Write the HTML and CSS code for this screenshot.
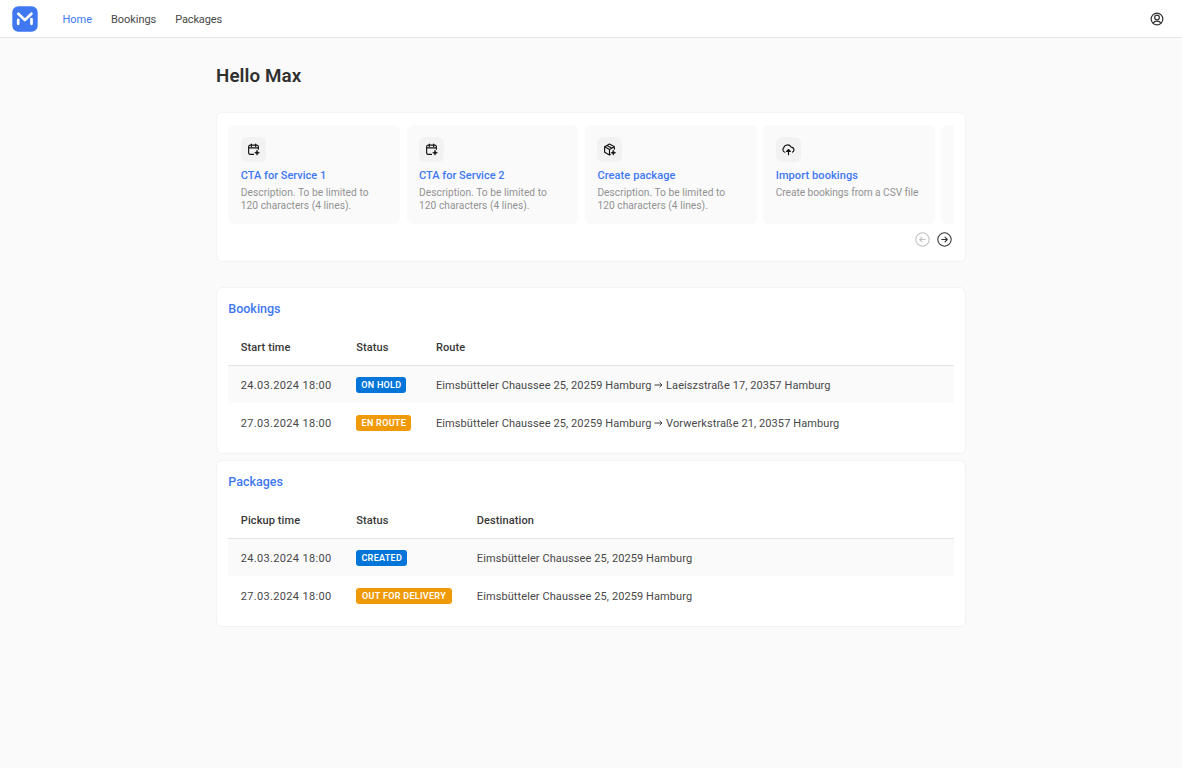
FILE: index.html
```html
<!DOCTYPE html>
<html lang="en">
<head>
<meta charset="utf-8">
<title>Home</title>
<link rel="stylesheet" href="styles.css">
</head>
<body>
<svg width="0" height="0" class="defs" aria-hidden="true">
  <symbol id="calendar" viewBox="0 0 24 24"><path d="M21 11.500V7a3 3 0 0 0-3-3H6a3 3 0 0 0-3 3v11a3 3 0 0 0 3 3h6M8 2v4.500M16 2v4.500M3 9h18"/><path fill="#111" stroke-width="1" d="M18.500 13.500l1.300 3.200 3.200 1.300-3.200 1.300-1.300 3.200-1.300-3.200L14 18l3.200-1.300z"/></symbol>
  <symbol id="package" viewBox="0 0 24 24"><path d="M21 11.500V7L12 2 3 7v10l9 5 1.500-.8M3 7l9 5 9-5M12 12v10M7.500 4.500l9 5"/><path fill="#111" stroke-width="1" d="M19 13.500l1.300 3.200 3.200 1.300-3.200 1.300-1.300 3.200-1.300-3.200-3.200-1.300 3.200-1.300z"/></symbol>
  <symbol id="cloud" viewBox="0 0 24 24"><path d="M5.500 17A4.800 4.800 0 0 1 3 9 7.500 7.500 0 0 1 16.800 7.500 5 5 0 0 1 19.500 16.800M12 21.500v-7"/><path fill="#111" d="M8.500 15.500 12 12l3.500 3.500z"/></symbol>
  <symbol id="arrow" viewBox="0 0 24 24"><circle cx="12" cy="12" r="10.700"/><path d="M7.500 12h9M12.800 8.300l3.700 3.700-3.700 3.700"/></symbol>
</svg>
<header class="topbar">
  <svg class="logo" viewBox="0 0 26 26"><rect x=".3" y=".3" width="25.400" height="25.400" rx="6" fill="#4078f2"/><path d="M6.200 13.800v4M19.500 13v4.800M6.300 7.800l6.600 6.200 6.500-6.200" fill="none" stroke="#fff" stroke-width="2.700" stroke-linecap="round" stroke-linejoin="round"/></svg>
  <nav class="nav"><a class="nav-home">Home</a><a class="nav-bookings">Bookings</a><a class="nav-packages">Packages</a></nav>
  <svg class="icon user" viewBox="0 0 24 24"><circle cx="12" cy="12" r="10"/><circle cx="12" cy="9.500" r="4"/><path d="M5.500 19c1.500-3 3.500-3.500 6.500-3.500s5 .5 6.500 3.500"/></svg>
</header>
<main class="page">
  <h1 class="greeting"><span>Hello Max</span></h1>
  <section class="card actions">
    <div class="track">
      <article class="tile"><div class="tile-icon"><svg class="icon"><use href="#calendar"/></svg></div><h3 class="cta">CTA for Service 1</h3><p>Description. To be limited to<br>120 characters (4 lines).</p></article>
      <article class="tile"><div class="tile-icon"><svg class="icon"><use href="#calendar"/></svg></div><h3 class="cta">CTA for Service 2</h3><p>Description. To be limited to<br>120 characters (4 lines).</p></article>
      <article class="tile"><div class="tile-icon"><svg class="icon"><use href="#package"/></svg></div><h3>Create package</h3><p>Description. To be limited to<br>120 characters (4 lines).</p></article>
      <article class="tile"><div class="tile-icon"><svg class="icon"><use href="#cloud"/></svg></div><h3>Import bookings</h3><p class="csv">Create bookings from a CSV file</p></article>
      <article class="tile"></article>
    </div>
    <div class="pager"><svg class="icon prev"><use href="#arrow"/></svg><svg class="icon next"><use href="#arrow"/></svg></div>
  </section>
  <section class="card listing bookings">
    <h2>Bookings</h2>
    <div class="row head"><span>Start time</span><span>Status</span><span>Route</span></div>
    <div class="row striped"><span class="date">24.03.2024 18:00</span><span class="badge blue hold">ON HOLD</span><span class="place">Eimsbütteler Chaussee 25, 20259 Hamburg <svg class="to" viewBox="0 0 9 8"><path d="M.5 4h7.500M5.700 1.800 8 4 5.700 6.200"/></svg> Laeiszstraße 17, 20357 Hamburg</span></div>
    <div class="row"><span class="date">27.03.2024 18:00</span><span class="badge orange route">EN ROUTE</span><span class="place">Eimsbütteler Chaussee 25, 20259 Hamburg <svg class="to" viewBox="0 0 9 8"><path d="M.5 4h7.500M5.700 1.800 8 4 5.700 6.200"/></svg> Vorwerkstraße 21, 20357 Hamburg</span></div>
  </section>
  <section class="card listing packages">
    <h2>Packages</h2>
    <div class="row head"><span>Pickup time</span><span>Status</span><span>Destination</span></div>
    <div class="row striped"><span class="date">24.03.2024 18:00</span><span class="badge blue created">CREATED</span><span class="place">Eimsbütteler Chaussee 25, 20259 Hamburg</span></div>
    <div class="row"><span class="date">27.03.2024 18:00</span><span class="badge orange delivery">OUT FOR DELIVERY</span><span class="place">Eimsbütteler Chaussee 25, 20259 Hamburg</span></div>
  </section>
</main>
</body>
</html>
```
FILE: styles.css
```css
* { box-sizing: border-box; }
body { margin: 0; height: 768px; overflow: hidden; background: #fafafa; color: #484848; font-family: Roboto, "Noto Sans", sans-serif; font-size: 11px; }
h1, h2, h3, p { margin: 0; }
.defs { display: block; }
.icon { display: block; width: 13px; height: 13px; fill: none; stroke: #111; stroke-width: 2.1; stroke-linecap: round; stroke-linejoin: round; }
.topbar { display: flex; align-items: center; height: 38px; padding: 0 18.500px 0 12px; background: #fff; border-bottom: 1px solid #e7e7e7; }
.logo { width: 26px; height: 26px; }
.nav { display: flex; flex: 1; gap: 19px; margin-left: 24.500px; padding-top: 1px; letter-spacing: -.02px; }
.nav-home { color: #4078f2; }
.nav-bookings { letter-spacing: -.05px; }
.nav-packages { letter-spacing: -.14px; }
.user { width: 14px; height: 14px; stroke: #333; }
.page { width: 749.500px; margin-left: 216px; padding-top: 27px; }
.greeting { height: 23px; margin-bottom: 24px; font-size: 18.800px; font-weight: 600; line-height: 23px; color: #303030; letter-spacing: .1px; }
.card { background: #fff; border: 1px solid #f3f3f3; border-radius: 6px; }
.actions { height: 150px; margin-bottom: 25px; padding: 11.500px 11px 0 11.300px; }
.track { display: flex; gap: 6.500px; overflow: hidden; }
.tile { flex: 0 0 171.800px; min-width: 0; height: 99.500px; padding: 12.500px 0 12.500px 12.500px; background: #fafafa; border-radius: 6px; }
.tile-icon { display: grid; place-items: center; width: 25px; height: 25px; margin-bottom: 5.500px; background: #f2f2f2; border-radius: 6px; }
.tile h3 { font-size: 11px; font-weight: 500; line-height: 16px; color: #4078f2; letter-spacing: .1px; }
.tile .cta { letter-spacing: 0; }
.tile p { margin-top: 2px; font-size: 10.200px; line-height: 13.400px; color: #929292; letter-spacing: .04px; white-space: nowrap; }
.tile .csv { letter-spacing: -.05px; }
.pager { display: flex; justify-content: flex-end; gap: 7px; margin-top: 8px; padding-right: 1.500px; }
.pager .icon { width: 15px; height: 15px; stroke: #333; stroke-width: 1.700; }
.pager .prev { transform: scaleX(-1); stroke: #c0c0c0; }
.listing { height: 166px; margin-bottom: 7px; padding: 10.500px 11px 0 11.300px; }
.bookings { height: 166.500px; margin-bottom: 6.500px; }
.packages { height: 166.500px; }
.listing h2 { height: 20px; margin-bottom: 9.500px; font-size: 12.500px; font-weight: 500; line-height: 20px; color: #4078f2; letter-spacing: 0; }
.row { display: grid; align-items: center; height: 37.500px; padding: 0 12.500px; white-space: nowrap; }
.row > span:not(.badge) { padding-top: 1.500px; }
.row:last-child > span:not(.badge) { padding-top: 2.500px; }
.bookings .row { grid-template-columns: 115.500px 79.700px 1fr; }
.packages .row { grid-template-columns: 115.500px 120.500px 1fr; }
.head { border-bottom: 1px solid #e4e4e4; color: #383838; font-weight: 500; letter-spacing: .1px; }
.striped { background: #fafafa; }
.date { letter-spacing: .33px; }
.place { letter-spacing: .09px; }
.to { width: 9px; height: 8px; fill: none; stroke: #404040; stroke-width: 1; }
.badge { justify-self: start; height: 16px; margin-top: 1.500px; border-radius: 3px; text-align: center; color: #fff; font-size: 9px; font-weight: 600; line-height: 17px; letter-spacing: .3px; }
.blue { background: #0275d8; }
.orange { background: #f09a08; }
.hold { width: 50px; }
.route { width: 55px; }
.created { width: 51px; }
.delivery { width: 95.500px; }
```
